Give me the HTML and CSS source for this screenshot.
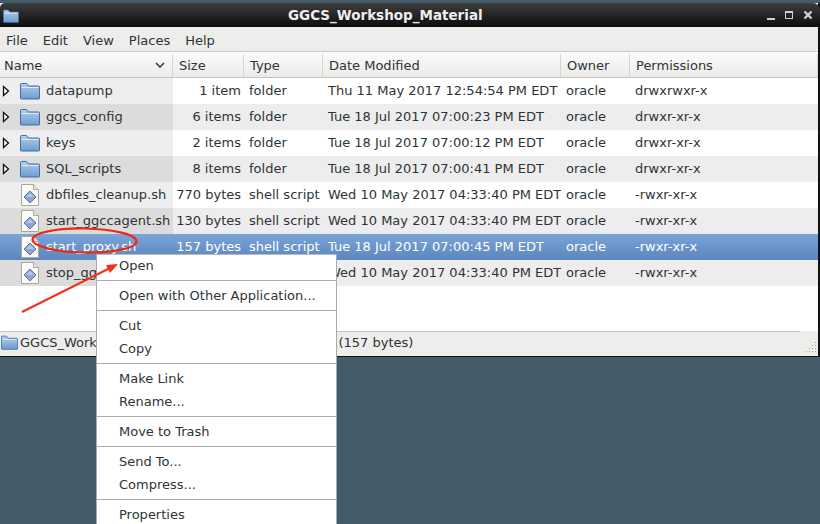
FILE: index.html
```html
<!DOCTYPE html>
<html>
<head>
	<meta charset="UTF-8">
	<title>GGCS_Workshop_Material</title>
	<link rel="stylesheet" href="styles.css">
</head>
<body>
	<svg class="defs" width="0" height="0">
		<defs>
			<linearGradient id="fold" x1="0" y1="0" x2="0" y2="1">
				<stop offset="0" stop-color="#b4cde9"/>
				<stop offset="1" stop-color="#6d9ccf"/>
			</linearGradient>
			<symbol id="folder" viewBox="0 0 20 20">
				<path d="M.5 17.500V3.500q0-1 1-1h5l2 2.500h10q1 0 1 1v11.500q0 .5-1 .5h-17q-1 0-1-.5z" fill="url(#fold)" stroke="#3f6fa5"/>
				<path d="M1.500 6.500h17" stroke="#e0eaf5" fill="none"/>
			</symbol>
			<symbol id="script" viewBox="0 0 20 24">
				<path d="M1.500 1.500h12l5 5v16h-17z" fill="#fbfbf8" stroke="#a8a89f"/>
				<path d="M13.500 1.500v5h5" fill="#e4e4dd" stroke="#a8a89f"/>
				<path d="M10 8l6 6-6 6-6-6z" fill="#8da6d0" stroke="#5d78a8"/>
				<path d="M10 10l4 4h-8z" fill="#b7c8e4"/>
			</symbol>
			<symbol id="expander" viewBox="0 0 8 12">
				<path d="M1.500 1.500l5 4.500-5 4.500z" fill="#fff" stroke="#111" stroke-width="1.300"/>
			</symbol>
		</defs>
	</svg>

	<div class="window">
		<div class="titlebar">
			<svg class="title-icon"><use href="#folder"/></svg>
			<span class="title">GGCS_Workshop_Material</span>
			<div class="win-buttons">
				<span class="btn-min"></span>
				<span class="btn-max"></span>
				<svg class="btn-close" viewBox="0 0 10 10"><path d="M1.500 1.500l7 7M8.500 1.500l-7 7" stroke="#d0d0d0" stroke-width="2.400"/></svg>
			</div>
		</div>

		<div class="menubar">
			<span>File</span><span>Edit</span><span>View</span><span>Places</span><span>Help</span>
		</div>

		<div class="cols head">
			<div class="hcell hname">Name
				<svg class="sort" viewBox="0 0 10 6"><path d="M1 1l4 4 4-4" fill="none" stroke="#333" stroke-width="1.500"/></svg>
			</div>
			<div class="hcell">Size</div>
			<div class="hcell">Type</div>
			<div class="hcell">Date Modified</div>
			<div class="hcell">Owner</div>
			<div class="hcell">Permissions</div>
		</div>

		<div class="list">
			<div class="cols row">
				<div class="name"><svg class="exp"><use href="#expander"/></svg><svg class="ico"><use href="#folder"/></svg>datapump</div>
				<div class="size">1 item</div><div>folder</div><div>Thu 11 May 2017 12:54:54 PM EDT</div><div>oracle</div><div>drwxrwxr-x</div>
			</div>
			<div class="cols row">
				<div class="name"><svg class="exp"><use href="#expander"/></svg><svg class="ico"><use href="#folder"/></svg>ggcs_config</div>
				<div class="size">6 items</div><div>folder</div><div>Tue 18 Jul 2017 07:00:23 PM EDT</div><div>oracle</div><div>drwxr-xr-x</div>
			</div>
			<div class="cols row">
				<div class="name"><svg class="exp"><use href="#expander"/></svg><svg class="ico"><use href="#folder"/></svg>keys</div>
				<div class="size">2 items</div><div>folder</div><div>Tue 18 Jul 2017 07:00:12 PM EDT</div><div>oracle</div><div>drwxr-xr-x</div>
			</div>
			<div class="cols row">
				<div class="name"><svg class="exp"><use href="#expander"/></svg><svg class="ico"><use href="#folder"/></svg>SQL_scripts</div>
				<div class="size">8 items</div><div>folder</div><div>Tue 18 Jul 2017 07:00:41 PM EDT</div><div>oracle</div><div>drwxr-xr-x</div>
			</div>
			<div class="cols row">
				<div class="name"><svg class="file"><use href="#script"/></svg>dbfiles_cleanup.sh</div>
				<div class="size">770 bytes</div><div>shell script</div><div>Wed 10 May 2017 04:33:40 PM EDT</div><div>oracle</div><div>-rwxr-xr-x</div>
			</div>
			<div class="cols row">
				<div class="name"><svg class="file"><use href="#script"/></svg>start_ggccagent.sh</div>
				<div class="size">130 bytes</div><div>shell script</div><div>Wed 10 May 2017 04:33:40 PM EDT</div><div>oracle</div><div>-rwxr-xr-x</div>
			</div>
			<div class="cols row selected">
				<div class="name"><svg class="file"><use href="#script"/></svg>start_proxy.sh</div>
				<div class="size">157 bytes</div><div>shell script</div><div>Tue 18 Jul 2017 07:00:45 PM EDT</div><div>oracle</div><div>-rwxr-xr-x</div>
			</div>
			<div class="cols row">
				<div class="name"><svg class="file"><use href="#script"/></svg>stop_ggccagent.sh</div>
				<div class="size">130 bytes</div><div>shell script</div><div>Wed 10 May 2017 04:33:40 PM EDT</div><div>oracle</div><div>-rwxr-xr-x</div>
			</div>
		</div>
		<div class="hscroll"></div>

		<div class="statusbar">
			<div class="pathbtn"><svg class="path-ico"><use href="#folder"/></svg>GGCS_Workshop_Material</div>
			<div class="status">"start_proxy.sh" selected (157 bytes)</div>
			<svg class="grip" viewBox="0 0 14 14">
				<g fill="#a5a5a0">
					<rect x="11" y="1" width="1" height="1"/>
					<rect x="8" y="4" width="1" height="1"/><rect x="11" y="4" width="1" height="1"/>
					<rect x="5" y="7" width="1" height="1"/><rect x="8" y="7" width="1" height="1"/><rect x="11" y="7" width="1" height="1"/>
					<rect x="2" y="10" width="1" height="1"/><rect x="5" y="10" width="1" height="1"/><rect x="8" y="10" width="1" height="1"/><rect x="11" y="10" width="1" height="1"/>
				</g>
			</svg>
		</div>
	</div>

	<ul class="menu">
		<li>Open</li>
		<li class="sep"></li>
		<li>Open with Other Application...</li>
		<li class="sep"></li>
		<li>Cut</li>
		<li>Copy</li>
		<li class="sep"></li>
		<li>Make Link</li>
		<li>Rename...</li>
		<li class="sep"></li>
		<li>Move to Trash</li>
		<li class="sep"></li>
		<li>Send To...</li>
		<li>Compress...</li>
		<li class="sep"></li>
		<li>Properties</li>
	</ul>

	<!-- red marks drawn on top of the screenshot -->
	<svg class="marks" viewBox="0 0 820 524">
		<ellipse cx="84.500" cy="240.500" rx="52" ry="12" transform="rotate(1 84.500 240.500)" fill="none" stroke="#ee2a14" stroke-width="2.200"/>
		<path d="M22 312L110 268" stroke="#f0301a" stroke-width="2" fill="none"/>
		<path d="M118 264l-12 1 4 8z" fill="#f0301a"/>
	</svg>
</body>
</html>
```

FILE: styles.css
```css
*{ margin: 0; padding: 0; box-sizing: border-box; }
html,body{ height: 100%; overflow: hidden; }
body{ background: #445b6a; font: 13px/17px "DejaVu Sans", sans-serif; color: #2e3436; padding-top: 3px; }
.defs{ position: absolute; }

.window{ width: 820px; height: 354px; display: flex; flex-direction: column; background: #ededeb; border-right: 2px solid #111; border-bottom: 1px solid #111; }

.titlebar{ height: 24px; flex: none; display: flex; align-items: center; position: relative; background: linear-gradient(#3d3d3d, #2a2a2a 40%, #0c0c0c); border-radius: 5px 7px 0 0; margin-right: -2px; color: #eee; }
.title-icon{ width: 16px; height: 16px; margin: 2px 0 0 3px; }
.title{ position: absolute; left: 288px; font-weight: bold; font-size: 13.5px; }
.win-buttons{ position: absolute; right: 7px; top: 0; height: 24px; display: flex; align-items: center; gap: 10px; }
.btn-min{ width: 8px; height: 2px; background: #d0d0d0; margin-top: 7px; }
.btn-max{ width: 8px; height: 8px; border: 1px solid #d0d0d0; border-top-width: 2px; }
.btn-close{ width: 10px; height: 10px; }

.menubar{ height: 25px; flex: none; display: flex; align-items: center; padding: 2px 0 0 6px; gap: 15px; background: #ededeb; border-bottom: 1px solid #c9c9c5; }

.cols{ display: grid; grid-template-columns: 173px 71px 79px 238px 69px 1fr; }

.head{ height: 26px; flex: none; background: linear-gradient(#fbfbfb, #ecebe9); border-bottom: 1px solid #c4c4c0; }
.hcell{ padding-left: 6px; border-right: 1px solid #d5d5d0; margin: 2px 0; line-height: 23px; position: relative; }
.hname{ padding-left: 4px; }
.sort{ position: absolute; right: 7px; top: 8px; width: 10px; height: 6px; }

.list{ flex: 1; background: #fff; }
.hscroll{ height: 1px; flex: none; margin-right: 18px; background: #c5c5c0; }
.row{ height: 26px; line-height: 25px; background: #fff; white-space: nowrap; }
.row > div{ padding-left: 5px; overflow: hidden; }
.row:nth-child(even){ background: #ededed; }
.row .name{ position: relative; padding-left: 46px; background: #eeeeee; }
.row:nth-child(even) .name{ background: #dcdcdc; }
.row .size{ padding: 0 3px 0 0; text-align: right; }

.row.selected{ background: linear-gradient(#7ba4d9, #5b87bc); color: #fff; }
.row.selected .name{ background: none; }

.exp{ position: absolute; left: 2px; top: 7px; width: 8px; height: 12px; }
.ico{ position: absolute; left: 20px; top: 3px; width: 20px; height: 20px; }
.file{ position: absolute; left: 20px; top: 1px; width: 20px; height: 24px; }

.statusbar{ height: 24px; flex: none; display: flex; align-items: center; position: relative; padding-bottom: 4px; background: #ededeb; }
.pathbtn{ width: 173px; display: flex; align-items: center; overflow: hidden; white-space: nowrap; }
.path-ico{ width: 17px; height: 17px; margin: 0 2px 0 1px; flex: none; }
.status{ white-space: nowrap; }
.grip{ position: absolute; right: 0; bottom: 1px; width: 14px; height: 14px; }

.menu{ position: absolute; left: 96px; top: 254px; width: 241px; height: 280px; background: #fff; border: 1px solid #aaa; border-top-color: #bbb; list-style: none; color: #2e3436; }
.menu li{ height: 23px; line-height: 21px; padding-left: 22px; white-space: nowrap; }
.menu li.sep{ height: 7px; padding: 0; position: relative; }
.menu li.sep::after{ content: ""; position: absolute; left: 0; right: 0; top: 2px; height: 1px; background: #adadad; }

.marks{ position: absolute; left: 0; top: 0; width: 820px; height: 524px; pointer-events: none; }
```
